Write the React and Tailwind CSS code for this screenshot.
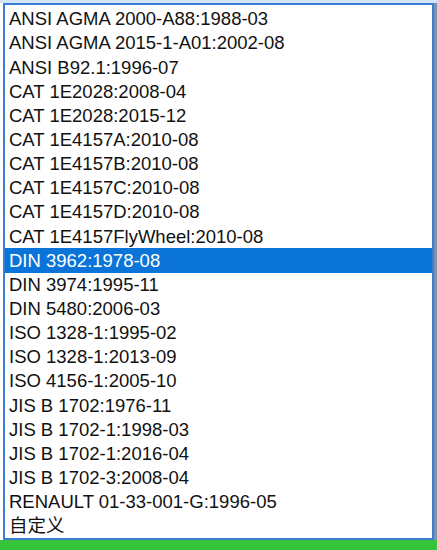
import React from "react";

const items = [
  "ANSI AGMA 2000-A88:1988-03",
  "ANSI AGMA 2015-1-A01:2002-08",
  "ANSI B92.1:1996-07",
  "CAT 1E2028:2008-04",
  "CAT 1E2028:2015-12",
  "CAT 1E4157A:2010-08",
  "CAT 1E4157B:2010-08",
  "CAT 1E4157C:2010-08",
  "CAT 1E4157D:2010-08",
  "CAT 1E4157FlyWheel:2010-08",
  "DIN 3962:1978-08",
  "DIN 3974:1995-11",
  "DIN 5480:2006-03",
  "ISO 1328-1:1995-02",
  "ISO 1328-1:2013-09",
  "ISO 4156-1:2005-10",
  "JIS B 1702:1976-11",
  "JIS B 1702-1:1998-03",
  "JIS B 1702-1:2016-04",
  "JIS B 1702-3:2008-04",
  "RENAULT 01-33-001-G:1996-05",
  "自定义",
];

export default function App() {
  return (
    <div
      className="w-[437px] h-[550px] bg-white flex flex-col overflow-hidden"
      style={{ fontFamily: '"Liberation Sans", "Noto Sans CJK SC", sans-serif' }}
    >
      <div className="h-[3px] bg-[#d3e5f6] shrink-0" />
      <div className="flex flex-1 min-h-0">
        <div className="w-[3px] bg-white shrink-0" />
        <div className="flex-1 border-2 border-[#3a7fd5] bg-white pt-[2px] overflow-hidden">
          {items.map((t, i) => (
            <div
              key={i}
              className={
                "h-[24.15px] flex items-center pl-[4px] pt-[1px] text-[18.5px] leading-none whitespace-nowrap " +
                (i === 10 ? "bg-[#0a74d8] text-white" : "text-[#111]")
              }
            >
              {t}
            </div>
          ))}
        </div>
        <div className="w-[3px] bg-[#7f93ab] shrink-0" />
      </div>
      <div className="h-[10px] bg-[#36c43a] shrink-0" />
    </div>
  );
}
